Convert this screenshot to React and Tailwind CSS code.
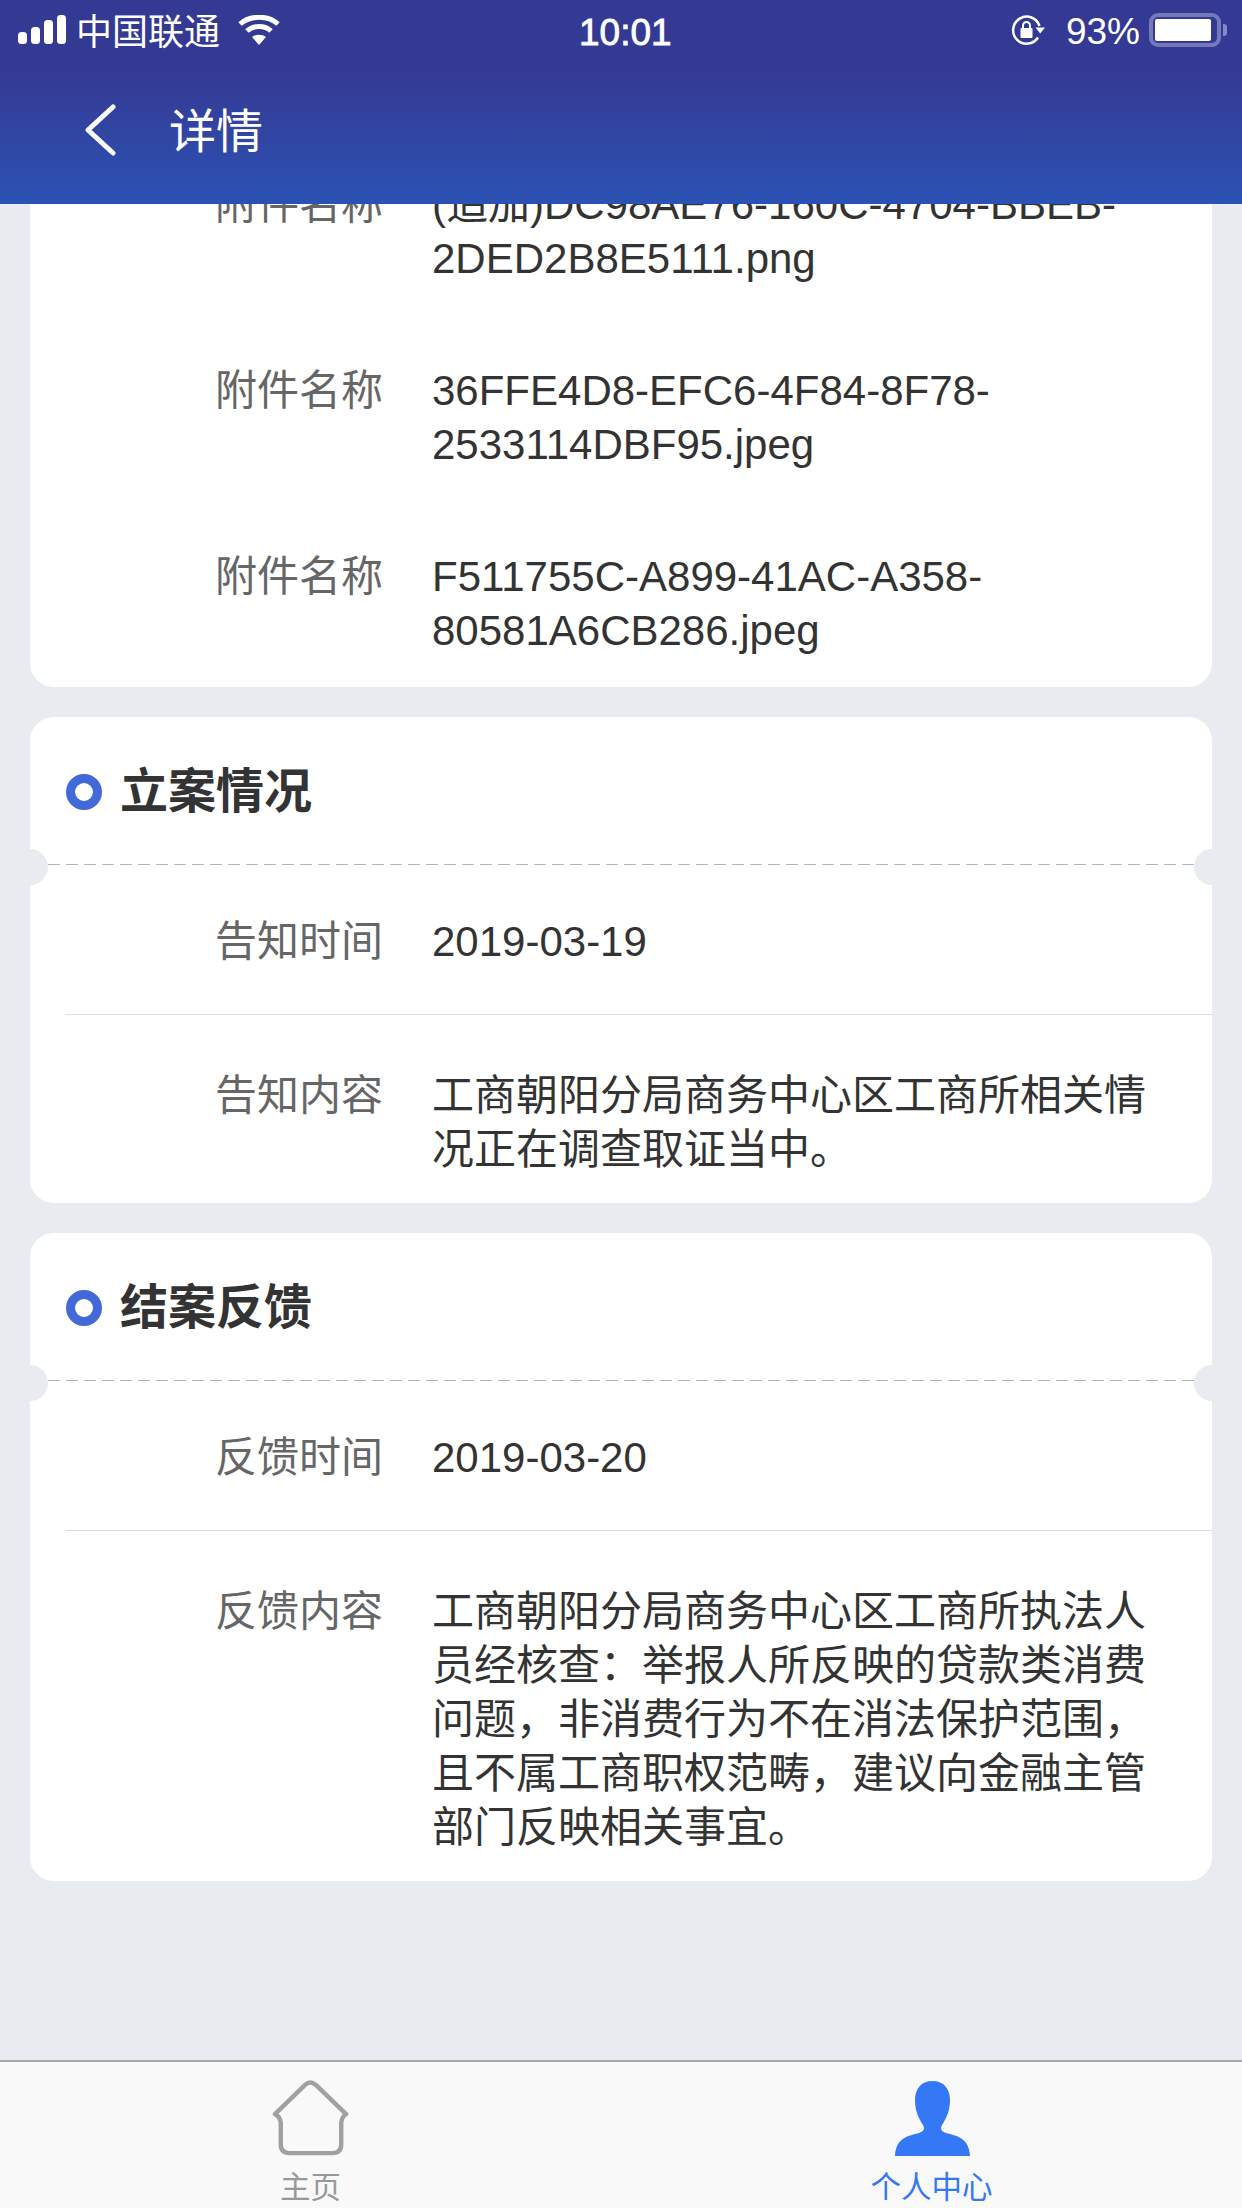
import React from "react";

const FONT = "font-['Liberation_Sans','Noto_Sans_CJK_SC',sans-serif]";

function StatusBar() {
  return (
    <div className="flex h-[60px] items-center pl-[18px] pr-[15px] text-[36px] leading-[60px] text-white">
      <div className="flex w-[561px] items-center">
        <svg width="48" height="30" viewBox="0 0 48 30" fill="#fff">
          <rect x="0" y="17" width="9" height="12" rx="3.5" />
          <rect x="13" y="12" width="9" height="17" rx="3.5" />
          <rect x="26" y="5" width="9" height="24" rx="3.5" />
          <rect x="39" y="0" width="9" height="29" rx="3.5" />
        </svg>
        <span className="ml-[10px] mt-[6px]">中国联通</span>
        <svg className="ml-[18px]" width="42" height="30" viewBox="0 0 42 30" fill="none" stroke="#fff">
          <path d="M2 9C12 0 30 0 40 9" strokeWidth="5" />
          <path d="M9 16C15 10 27 10 33 16" strokeWidth="5" />
          <path d="M14 22C18 19 24 19 28 22L21 30Z" fill="#fff" stroke="none" />
        </svg>
      </div>
      <span className="mt-[6px] text-[37px] [-webkit-text-stroke:0.8px_white]">10:01</span>
      <div className="ml-auto flex items-center">
        <svg width="35" height="30" viewBox="0 0 35 30" fill="none" stroke="#fff" strokeWidth="2.5">
          <path d="M27 22.5A13.5 13.5 0 1 1 28.5 11" />
          <path d="M24.5 12.5H34L29.2 18.5Z" fill="#fff" stroke="none" />
          <rect x="9.5" y="13" width="12" height="10" rx="1" fill="#fff" stroke="none" />
          <path d="M12 13V10.5a3.5 3.5 0 0 1 7 0V13" strokeWidth="2" />
        </svg>
        <span className="ml-[20px] mt-[3px] text-[37px]">93%</span>
        <div className="ml-[9px] flex items-center">
          <div className="h-[34px] w-[72px] rounded-[9px] border-[4px] border-[#7579bc] p-[2px]">
            <div className="h-full w-[93%] rounded-[2px] bg-white" />
          </div>
          <div className="ml-[2px] h-[12px] w-[4px] rounded-r-[3px] bg-[#8589c5]" />
        </div>
      </div>
    </div>
  );
}

function Header() {
  return (
    <header className="relative z-10 h-[204px] shrink-0 bg-linear-to-b from-[#343a93] from-[35%] to-[#2a52b4]">
      <StatusBar />
      <div className="flex h-[140px] items-center">
        <svg className="ml-[84px]" width="32" height="52" viewBox="0 0 32 52" fill="none" stroke="#fff" strokeWidth="5" strokeLinecap="round" strokeLinejoin="round">
          <path d="M29 3L4 26L29 49" />
        </svg>
        <h1 className="ml-[53px] mt-[3px] text-[47px] text-white">详情</h1>
      </div>
    </header>
  );
}

function Row({ label, value, last }) {
  return (
    <div className={`ml-[35px] flex ${last ? "border-t border-[#dddddd] pb-[26px] pt-[54px]" : "pb-[45px] pt-[50px]"}`}>
      <div className="w-[318px] shrink-0 text-right text-[#666666]">{label}</div>
      <div className="ml-[49px] w-[720px] text-[#333333]">{value}</div>
    </div>
  );
}

function SectionCard({ title, children }) {
  return (
    <section className="relative mx-[30px] mt-[30px] rounded-[24px] bg-white">
      <div className="flex h-[147px] items-center pt-[2px] pl-[36px]">
        <span className="h-[36px] w-[36px] rounded-full border-[9px] border-[#4169d8]" />
        <h2 className="ml-[18px] text-[48px] font-bold text-[#333333]">{title}</h2>
      </div>
      <div className="mx-[18px] h-px bg-[repeating-linear-gradient(90deg,#a9b6c8_0,#a9b6c8_12px,transparent_12px,transparent_18px)]" />
      <span className="absolute -left-[18px] top-[132px] h-[36px] w-[36px] rounded-full bg-[#e8ebf0]" />
      <span className="absolute -right-[18px] top-[132px] h-[36px] w-[36px] rounded-full bg-[#e8ebf0]" />
      {children}
    </section>
  );
}

function AttachRow({ value, first }) {
  return (
    <div className={`ml-[35px] flex ${first ? "" : "mt-[78px]"}`}>
      <div className="w-[318px] shrink-0 text-right text-[#666666]">附件名称</div>
      <div className="ml-[49px] w-[720px] text-[#333333]">{value}</div>
    </div>
  );
}

function TabBar() {
  return (
    <nav className="grid h-[148px] shrink-0 grid-cols-2 border-t-2 border-[#a9a9ab] bg-[#f9f9f9] text-[30.5px] leading-[40px]">
      <div className="flex flex-col items-center pt-[17px] text-[#999999]">
        <svg width="78" height="80" viewBox="0 0 80 80" fill="none" stroke="#a0a0a0" strokeWidth="4.5" strokeLinejoin="round" strokeLinecap="round">
          <path d="M34 5Q39 0 45 5L76 35Q72 37 71 44V66Q71 75 62 75H18Q9 75 9 66V44Q8 37 3 35Z" />
        </svg>
        <span className="mt-[8px]">主页</span>
      </div>
      <div className="flex flex-col items-center pt-[19px] text-[#3478f6]">
        <svg width="76" height="76" viewBox="0 0 76 76" fill="#3478f6">
          <path d="M38.5 0C50 0 56 8 56 19C56 30 52 38 48 44C46 48 47 50 52 52C62 55 75 56 76 75H1C2 56 15 55 25 52C30 50 31 48 29 44C25 38 21 30 21 19C21 8 27 0 38.5 0Z" />
        </svg>
        <span className="mt-[10px]">个人中心</span>
      </div>
    </nav>
  );
}

export default function App() {
  return (
    <div className={`flex h-[2208px] w-[1242px] flex-col overflow-hidden bg-[#e8ebf0] text-[42px] leading-[54px] ${FONT}`}>
      <Header />
      <main className="flex-1 overflow-hidden">
        {/* list is scrolled, first card starts above the header */}
        <section className="mx-[30px] -mt-[100px] rounded-[24px] bg-white pb-[29px] pt-[74px]">
          <AttachRow first value="(追加)DC98AE76-160C-4704-BBEB-2DED2B8E5111.png" />
          <AttachRow value="36FFE4D8-EFC6-4F84-8F78-2533114DBF95.jpeg" />
          <AttachRow value="F511755C-A899-41AC-A358-80581A6CB286.jpeg" />
        </section>

        <SectionCard title="立案情况">
          <Row label="告知时间" value="2019-03-19" />
          <Row last label="告知内容" value="工商朝阳分局商务中心区工商所相关情况正在调查取证当中。" />
        </SectionCard>

        <SectionCard title="结案反馈">
          <Row label="反馈时间" value="2019-03-20" />
          <Row last label="反馈内容" value="工商朝阳分局商务中心区工商所执法人员经核查：举报人所反映的贷款类消费问题，非消费行为不在消法保护范围，且不属工商职权范畴，建议向金融主管部门反映相关事宜。" />
        </SectionCard>
      </main>
      <TabBar />
    </div>
  );
}
